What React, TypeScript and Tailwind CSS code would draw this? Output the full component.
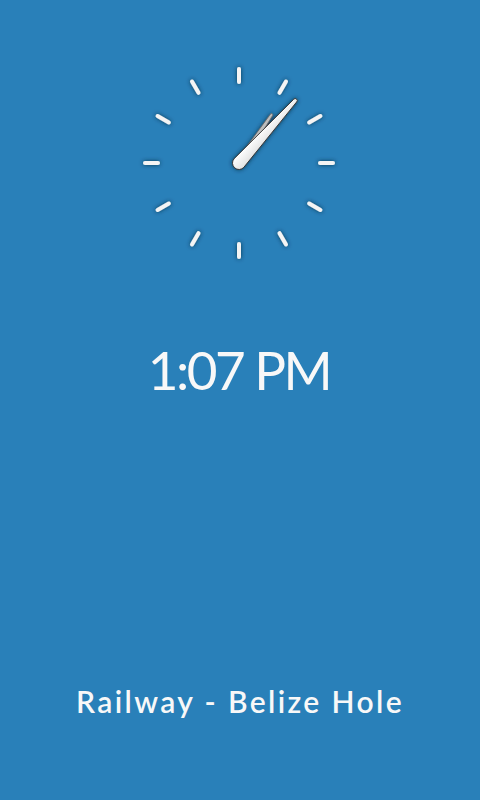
import React from 'react';

const ticks = Array.from({ length: 12 }, (_, i) => i * 30);

const Clock = () => {
  return (
    <svg width="220" height="220" viewBox="0 0 220 220">
      <defs>
        <filter id="glow" x="-50%" y="-50%" width="200%" height="200%">
          <feDropShadow dx="0" dy="0" stdDeviation="2" floodColor="#0b2a40" floodOpacity="0.85" />
        </filter>
        <linearGradient id="handFill" x1="0" y1="0" x2="1" y2="0">
          <stop offset="0" stopColor="#ffffff" />
          <stop offset="1" stopColor="#e2e2e2" />
        </linearGradient>
      </defs>
      <g transform="translate(110 110)" filter="url(#glow)">
        {ticks.map((a) => (
          <line
            key={a}
            x1="0"
            y1="-81"
            x2="0"
            y2="-94"
            stroke="#f4f4f4"
            strokeWidth="4"
            strokeLinecap="round"
            transform={`rotate(${a})`}
          />
        ))}
        {/* hour hand */}
        <path
          d="M -3.5 0 L -1.3 -58 A 1.3 1.3 0 0 1 1.3 -58 L 3.5 0 Z"
          fill="#bdbdbd"
          stroke="#666"
          strokeWidth="0.7"
          transform="rotate(34)"
        />
        {/* minute hand */}
        <path
          d="M -6.5 0 L -2 -84 A 2 2 0 0 1 2 -84 L 6.5 0 A 6.5 6.5 0 0 1 -6.5 0 Z"
          fill="url(#handFill)"
          stroke="#333"
          strokeWidth="0.9"
          transform="rotate(42)"
        />
      </g>
    </svg>
  );
};

export default function App() {
  return (
    <div className="w-[480px] h-[800px] bg-[#2980b9] flex flex-col items-center text-[#f8f8f8] font-['Lato','Open_Sans',sans-serif]">
      <div className="mt-[53px] mr-[3px]">
        <Clock />
      </div>
      <div className="mt-[70px] text-[53px] leading-none tracking-[-2.5px] mr-[2px]">
        1:07 PM
      </div>
      <div className="mt-auto mb-[84px] text-[30px] font-semibold leading-none tracking-[2.4px]">
        Railway - Belize Hole
      </div>
    </div>
  );
}
